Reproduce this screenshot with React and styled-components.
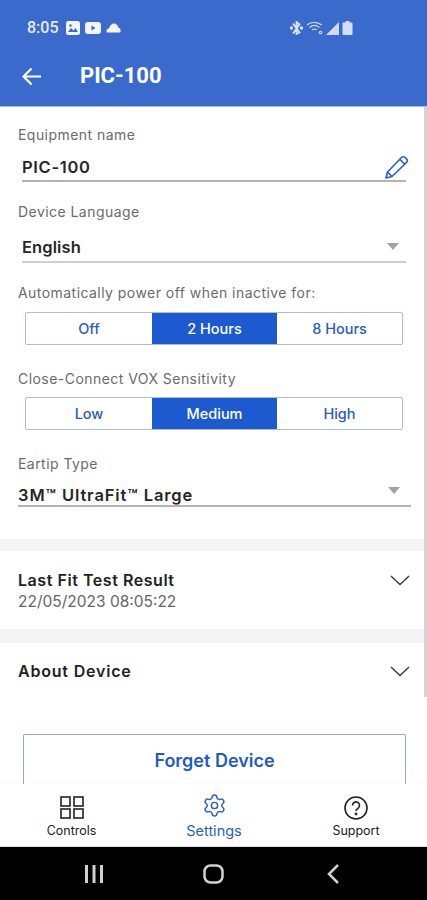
import React from "react";
import styled, { createGlobalStyle } from "styled-components";
import { Settings } from "lucide-react";

const Global = createGlobalStyle`
  html, body { margin: 0; padding: 0; background: #fff; }
  * { box-sizing: border-box; }
  body { font-family: "Inter", "Liberation Sans", sans-serif; }
`;
const Page = styled.div`
  width: 427px; height: 900px; display: flex; flex-direction: column; overflow: hidden; background: #fff;
`;
const Header = styled.header`
  height: 107px; flex: none; background: #3a6bcc; color: #fff; border-bottom: 1px solid #a9bde6;
  display: flex; flex-direction: column;
`;
const StatusBar = styled.div`
  height: 55px; padding: 18px 0 0 27px; display: flex; align-items: flex-start;
`;
const Time = styled.span`
  font: 500 16px/20px "Roboto", sans-serif; color: #e6ecfa; margin-right: 2px;
`;
const StatusLeft = styled.div`
  display: flex; align-items: center; gap: 5px; height: 20px; width: 263px;
`;
const StatusRight = styled.div`
  display: flex; align-items: center; gap: 3px; height: 20px; opacity: .88;
`;
const TitleRow = styled.div`
  height: 42px; display: flex; align-items: center; padding-left: 21px;
`;
const Title = styled.h1`
  margin: 0 0 0 38px; font: 700 22px/28px "Roboto", sans-serif; color: #fff;
`;
const Content = styled.main`
  flex: 1; min-height: 0; overflow: hidden; position: relative; background: #fff;
`;
const ScrollThumb = styled.div`
  position: absolute; right: 0; top: 0; width: 3px; height: 590px; background: #d4d4d6;
`;
const Form = styled.section`
  padding: 20px 18px 0;
`;
const FieldLabel = styled.div`
  font-size: 14px; line-height: 16px; color: #6b6b6b; font-weight: 400; letter-spacing: .45px;
  margin-top: ${p => p.$top || 0}px;
`;
const FieldRow = styled.div`
  display: flex; align-items: center; justify-content: space-between;
  margin: ${p => p.$gap}px ${p => p.$wide ? -2 : 3}px 0 ${p => p.$wide ? 0 : 4}px;
  height: ${p => p.$h}px;
  padding-right: ${p => p.$wide ? 5 : 1}px;
  border-bottom: 2px solid ${p => p.$dark ? "#b4b4b4" : "#cfcfcf"};
`;
const FieldValue = styled.span`
  font-size: 16.5px; font-weight: 600; color: #262626; letter-spacing: ${p => p.$track}px;
`;
const PencilWrap = styled.span`
  display: flex; margin-right: -5px;
`;
const Caret = styled.span`
  width: 0; height: 0; border-left: 6.5px solid transparent; border-right: 6.5px solid transparent;
  border-top: 7px solid #a3a3a3; margin-right: 6px; margin-top: ${p => p.$up ? -10 : -2}px;
`;
const Segments = styled.div`
  display: grid; grid-template-columns: 126px 125px 1fr; height: 33px; margin: ${p => p.$gap}px 6px 0 7px;
  border: 1px solid #a9bde3; border-radius: 2px;
`;
const Segment = styled.div`
  display: flex; align-items: center; justify-content: center;
  font-size: 14.5px; font-weight: 500;
  color: ${p => p.$active ? "#fff" : "#2a5bc0"};
  background: ${p => p.$active ? "#1d5ad0" : "transparent"};
`;
const Band = styled.div`
  height: ${p => p.$h}px; background: #f3f4f5; margin-top: ${p => p.$top || 0}px;
`;
const Accordion = styled.div`
  height: ${p => p.$h}px; padding: ${p => p.$pad}px 17px 0 18px; display: flex; justify-content: space-between; align-items: flex-start;
`;
const AccTitle = styled.div`
  font-size: 16px; line-height: 20px; font-weight: 600; color: #222; letter-spacing: ${p => p.$track}px;
`;
const AccSub = styled.div`
  font-size: 15.5px; line-height: 20px; color: #666; margin-top: 2px;
`;
const ChevronWrap = styled.span`
  display: flex; margin-top: 5px;
`;
const Forget = styled.div`
  margin: 29px 21px 0 23px; height: 80px; border: 1px solid #8fa8dc; border-bottom: 0; border-radius: 2px 2px 0 0;
  display: flex; justify-content: center; padding-top: 15px;
  font-size: 18px; line-height: 22px; font-weight: 600; color: #1f5bc4;
`;
const Nav = styled.nav`
  height: 63px; flex: none; background: #fff; display: grid; grid-template-columns: 143px 142px 142px;
  box-shadow: 0 -1px 1px rgba(0,0,0,.02);
  border-bottom: 1px solid #ddd; position: relative;
`;
const NavItem = styled.div`
  display: flex; flex-direction: column; align-items: center; padding-top: ${p => p.$pad}px;
  color: ${p => p.$active ? "#2a5fc4" : "#222"};
`;
const NavLabel = styled.span`
  font-size: ${p => p.$big ? 14.5 : 12.5}px; line-height: 16px; margin-top: ${p => p.$gap}px; color: inherit;
`;
const SysBar = styled.div`
  height: 53px; flex: none; background: #000; display: flex; align-items: center;
`;
const SysSlot = styled.div`
  width: ${p => p.$w}px; display: flex; justify-content: center;
`;

const Back = () => (
  <svg width="21" height="21" viewBox="0 0 21 21" fill="none" stroke="#fff" strokeWidth="2.2">
    <path d="M20 10.5H3M10.5 2.5 2.5 10.5l8 8" />
  </svg>
);
const Pencil = () => (
  <PencilWrap>
    <svg width="26" height="26" viewBox="0 0 26 26" fill="none" stroke="#2d62c6" strokeWidth="1.7" strokeLinejoin="round">
      <path d="M2 24l1.500-6L17.500 3.500a2.600 2.600 0 0 1 3.700 0l1.300 1.300a2.600 2.600 0 0 1 0 3.700L8 22.500z" />
      <path d="M16 5.500l4.700 4.700M3.500 18l4.500 4.500" />
    </svg>
  </PencilWrap>
);
const Chevron = () => (
  <ChevronWrap>
    <svg width="20" height="11" viewBox="0 0 20 11" fill="none" stroke="#3a3a3a" strokeWidth="1.4">
      <path d="M1 1l9 8.500 9-8.500" />
    </svg>
  </ChevronWrap>
);

export default function App() {
  return (
    <Page>
      <Global />
      <Header>
        <StatusBar>
          <StatusLeft>
            <Time>8:05</Time>
            <svg width="14" height="14" viewBox="0 0 14 14"><rect width="14" height="14" rx="2.5" fill="#f2f5fc" /><path d="M2 11l3-4 2.500 2.500L9.500 7 12 11z" fill="#3a6bcc" /><circle cx="4.500" cy="4.500" r="1.200" fill="#3a6bcc" /></svg>
            <svg width="16" height="12" viewBox="0 0 16 12"><rect width="16" height="12" rx="3" fill="#f2f5fc" /><path d="M6.500 3.500v5l4-2.500z" fill="#3a6bcc" /></svg>
            <svg width="15" height="10" viewBox="0 0 15 10"><path d="M1 9.500c-1.400-2 0-4 2-4C4 2 6 .5 8 .5c2.400 0 4 2 4.200 4 2 .2 3 3 2 5z" fill="#f2f5fc" /></svg>
          </StatusLeft>
          <StatusRight>
            <svg width="13" height="14" viewBox="0 0 13 14" fill="none" stroke="#f2f5fc" strokeWidth="1.800"><path d="M3 2.500l6.500 9L6.500 13V1l3 2.500-6.500 9" /><circle cx="1.500" cy="7" r=".8" fill="#f2f5fc" /><circle cx="11.500" cy="7" r=".8" fill="#f2f5fc" /></svg>
            <svg width="17" height="14" viewBox="0 0 17 14" fill="none" stroke="#dfe7f8" strokeWidth="1.200"><path d="M1 4c4-3.500 10-3.500 15 0M3.500 6.500c3-2.500 7-2.500 10 0M6 9c1.500-1 3.500-1 5 0" /><circle cx="14.500" cy="11.500" r="1.200" /></svg>
            <svg width="13" height="13" viewBox="0 0 13 13"><path d="M0 13L13 0v13z" fill="#e4ebfa" /></svg>
            <svg width="11" height="14" viewBox="0 0 11 14"><path d="M3.500 0h4v1.500H9.500a1 1 0 0 1 1 1V13a1 1 0 0 1-1 1h-8a1 1 0 0 1-1-1V2.500a1 1 0 0 1 1-1h2z" fill="#e9effb" /></svg>
          </StatusRight>
        </StatusBar>
        <TitleRow>
          <Back />
          <Title>PIC-100</Title>
        </TitleRow>
      </Header>
      <Content>
        <Form>
          <FieldLabel>Equipment name</FieldLabel>
          <FieldRow $dark $gap={11} $h={28}>
            <FieldValue $track={0.7}>PIC-100</FieldValue>
            <Pencil />
          </FieldRow>
          <FieldLabel $top={22}>Device Language</FieldLabel>
          <FieldRow $gap={13} $h={30}>
            <FieldValue $track={0.1}>English</FieldValue>
            <Caret />
          </FieldRow>
          <FieldLabel $top={22}>Automatically power off when inactive for:</FieldLabel>
          <Segments $gap={11}>
            <Segment>Off</Segment>
            <Segment $active>2 Hours</Segment>
            <Segment>8 Hours</Segment>
          </Segments>
          <FieldLabel $top={26}>Close-Connect VOX Sensitivity</FieldLabel>
          <Segments $gap={10}>
            <Segment>Low</Segment>
            <Segment $active>Medium</Segment>
            <Segment>High</Segment>
          </Segments>
          <FieldLabel $top={26}>Eartip Type</FieldLabel>
          <FieldRow $wide $dark $gap={13} $h={22}>
            <FieldValue $track={0.9}>3M™ UltraFit™ Large</FieldValue>
            <Caret $up />
          </FieldRow>
        </Form>
        <Band $h={12} $top={32} />
        <Accordion $h={78} $pad={19}>
          <div>
            <AccTitle $track={0.55}>Last Fit Test Result</AccTitle>
            <AccSub>22/05/2023 08:05:22</AccSub>
          </div>
          <Chevron />
        </Accordion>
        <Band $h={14} />
        <Accordion $h={62} $pad={18}>
          <AccTitle $track={0.8}>About Device</AccTitle>
          <Chevron />
        </Accordion>
        <Forget>Forget Device</Forget>
        <ScrollThumb />
      </Content>
      <Nav>
        <NavItem $pad={12}>
          <svg width="24" height="23" viewBox="0 0 24 23" fill="none" stroke="#222" strokeWidth="1.600">
            <rect x="1" y="1" width="9" height="9" /><rect x="14" y="1" width="9" height="9" />
            <rect x="1" y="13" width="9" height="9" /><rect x="14" y="13" width="9" height="9" />
          </svg>
          <NavLabel $gap={4}>Controls</NavLabel>
        </NavItem>
        <NavItem $active $pad={9}>
          <Settings size={25} strokeWidth={1.4} color="#2a5fc4" />
          <NavLabel $big $gap={5}>Settings</NavLabel>
        </NavItem>
        <NavItem $pad={12}>
          <svg width="24" height="24" viewBox="0 0 24 24" fill="none" stroke="#222" strokeWidth="1.600">
            <circle cx="12" cy="12" r="11" />
            <path d="M8.500 9.500a3.500 3.500 0 1 1 5.500 2.800c-1.200.8-2 1.400-2 2.700" />
            <circle cx="12" cy="18" r=".6" fill="#222" />
          </svg>
          <NavLabel $gap={3}>Support</NavLabel>
        </NavItem>
      </Nav>
      <SysBar>
        <SysSlot $w={187}>
          <svg width="18" height="18" viewBox="0 0 18 18" fill="#d0d0d0"><rect x="0" y="0" width="3" height="18" /><rect x="7.500" y="0" width="3" height="18" /><rect x="15" y="0" width="3" height="18" /></svg>
        </SysSlot>
        <SysSlot $w={52}>
          <svg width="21" height="20" viewBox="0 0 21 20" fill="none" stroke="#d0d0d0" strokeWidth="2.500"><rect x="1.500" y="1.500" width="18" height="17" rx="6" /></svg>
        </SysSlot>
        <SysSlot $w={188}>
          <svg width="12" height="20" viewBox="0 0 12 20" fill="none" stroke="#d0d0d0" strokeWidth="2.500"><path d="M11 1L2 10l9 9" /></svg>
        </SysSlot>
      </SysBar>
    </Page>
  );
}
